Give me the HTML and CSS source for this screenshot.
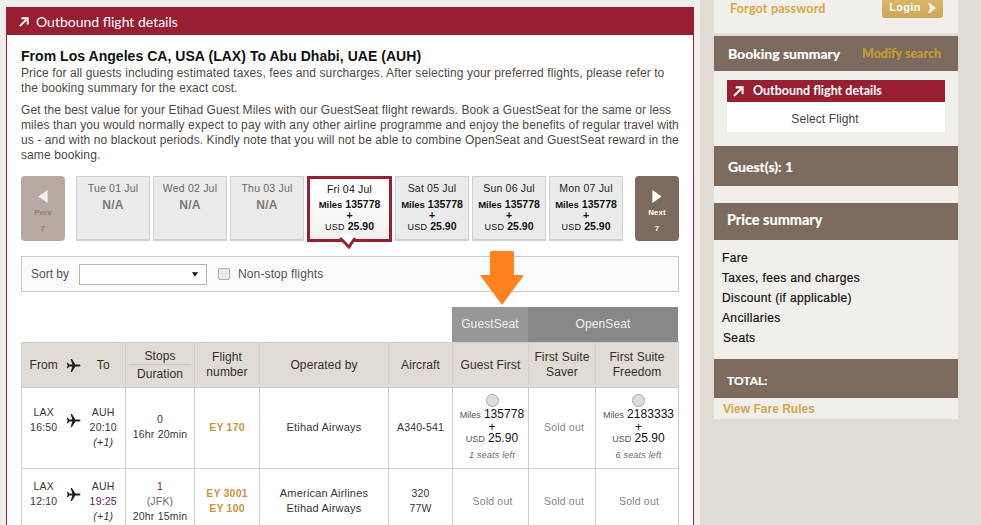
FILE: index.html
```html
<!DOCTYPE html>
<html lang="en">
<head>
<meta charset="utf-8">
<title>Outbound flight details</title>
<link rel="stylesheet" href="styles.css">
</head>
<body>
<div class="page">
  <main class="panel">
    <h2 class="panel-head"><svg class="go" viewBox="0 0 12 12"><path d="M1 11 9 3M3 1.500h7.500V9" fill="none" stroke="#fff" stroke-width="2.200"/></svg>Outbound flight details</h2>
    <div class="panel-body">
      <h3 class="route">From Los Angeles CA, USA (LAX) To Abu Dhabi, UAE (AUH)</h3>
      <p class="intro">Price for all guests including estimated taxes, fees and surcharges. After selecting your preferred flights, please refer to<br>the booking summary for the exact cost.</p>
      <p class="intro second">Get the best value for your Etihad Guest Miles with our GuestSeat flight rewards. Book a GuestSeat for the same or less<br>miles than you would normally expect to pay with any other airline programme and enjoy the benefits of regular travel with<br>us - and with no blackout periods. Kindly note that you will not be able to combine OpenSeat and GuestSeat reward in the<br>same booking.</p>

      <div class="dates">
        <div class="nav prev"><svg viewBox="0 0 10 14" class="nav-ico"><path d="M10 0v14L0 7z" fill="#f1efeb"/></svg><b>Prev</b><b>7</b></div>
        <div class="day na"><span>Tue 01 Jul</span><strong>N/A</strong></div>
        <div class="day na"><span>Wed 02 Jul</span><strong>N/A</strong></div>
        <div class="day na"><span>Thu 03 Jul</span><strong>N/A</strong></div>
        <div class="day sel"><span>Fri 04 Jul</span><em><i>Miles</i> 135778</em><em>+</em><em><i class="usd">USD</i> 25.90</em>
          <svg class="tail" viewBox="0 0 16 10"><path d="M0 0 9 9 15 0" fill="#fff" stroke="#981e32" stroke-width="3"/><path d="M2 0H14V-3H2z" fill="#fff"/></svg>
        </div>
        <div class="day"><span>Sat 05 Jul</span><em><i>Miles</i> 135778</em><em>+</em><em><i class="usd">USD</i> 25.90</em></div>
        <div class="day"><span>Sun 06 Jul</span><em><i>Miles</i> 135778</em><em>+</em><em><i class="usd">USD</i> 25.90</em></div>
        <div class="day"><span>Mon 07 Jul</span><em><i>Miles</i> 135778</em><em>+</em><em><i class="usd">USD</i> 25.90</em></div>
        <div class="nav next"><svg viewBox="0 0 10 14" class="nav-ico"><path d="M0 0v14L10 7z" fill="#fff"/></svg><b>Next</b><b>7</b></div>
      </div>

      <div class="sortbar">
        <span>Sort by</span>
        <div class="select"><svg viewBox="0 0 8 6"><path d="M0 0h8L4 6z" fill="#111"/></svg></div>
        <span class="check"></span>
        <span class="nonstop">Non-stop flights</span>
      </div>

      <div class="arrow"><svg viewBox="0 0 44 54"><path d="M10 1.500Q10 0 11.500 0H32.500Q34 0 34 1.500V24H42.500Q44 24 43 25.500L22 54 1 25.500Q0 24 1.500 24H10z" fill="#ff8122"/></svg></div>

      <div class="groups">
        <div class="group guest">GuestSeat</div>
        <div class="group open">OpenSeat</div>
      </div>

      <table class="flights">
        <colgroup>
          <col class="c-route"><col class="c-stops"><col class="c-flight"><col class="c-op"><col class="c-air"><col class="c-gf"><col class="c-sv"><col class="c-fr">
        </colgroup>
        <thead>
          <tr>
            <th><div class="legs head-legs"><span>From</span><svg class="plane" viewBox="0 0 16 14"><path d="M15.500 7c0-.8-1-1.100-2-1.100H10L6.300 0H4.900l1.900 5.900H3.400L1.900 4H.8l.9 3-.9 3h1.100l1.500-1.900h3.400L4.900 14h1.400L10 8.100h3.500c1 0 2-.3 2-1.100z" fill="#221c18"/></svg><span>To</span></div></th>
            <th class="stops-head"><div class="stop-line">Stops</div><div>Duration</div></th>
            <th>Flight<br>number</th>
            <th>Operated by</th>
            <th>Aircraft</th>
            <th>Guest First</th>
            <th>First Suite<br>Saver</th>
            <th>First Suite<br>Freedom</th>
          </tr>
        </thead>
        <tbody>
          <tr class="r1">
            <td><div class="legs"><span>LAX<br>16:50<br>&nbsp;</span><svg class="plane" viewBox="0 0 16 14"><path d="M15.500 7c0-.8-1-1.100-2-1.100H10L6.300 0H4.900l1.900 5.900H3.400L1.900 4H.8l.9 3-.9 3h1.100l1.500-1.900h3.400L4.900 14h1.400L10 8.100h3.500c1 0 2-.3 2-1.100z" fill="#221c18"/></svg><span>AUH<br>20:10<br><i class="plus">(+1)</i></span></div></td>
            <td>0<br>16hr 20min</td>
            <td class="fl">EY 170</td>
            <td class="op">Etihad Airways</td>
            <td>A340-541</td>
            <td class="fare"><span class="radio"></span><div><small>Miles</small> <b>135778</b></div><div class="pl">+</div><div class="us"><small>USD</small> <b>25.90</b></div><i class="left">1 seats left</i></td>
            <td class="sold">Sold out</td>
            <td class="fare"><span class="radio"></span><div><small>Miles</small> <b>2183333</b></div><div class="pl">+</div><div class="us"><small>USD</small> <b>25.90</b></div><i class="left">6 seats left</i></td>
          </tr>
          <tr class="r2">
            <td><div class="legs"><span>LAX<br>12:10<br>&nbsp;</span><svg class="plane" viewBox="0 0 16 14"><path d="M15.500 7c0-.8-1-1.100-2-1.100H10L6.300 0H4.900l1.900 5.900H3.400L1.900 4H.8l.9 3-.9 3h1.100l1.500-1.900h3.400L4.900 14h1.400L10 8.100h3.500c1 0 2-.3 2-1.100z" fill="#221c18"/></svg><span>AUH<br><span class="purple">19:25</span><br><i class="plus">(+1)</i></span></div></td>
            <td><span class="purple">1</span><br><span class="via">(JFK)</span><br>20hr 15min</td>
            <td class="fl">EY 3001<br>EY 100</td>
            <td class="op">American Airlines<br>Etihad Airways</td>
            <td>320<br>77W</td>
            <td class="sold">Sold out</td>
            <td class="sold">Sold out</td>
            <td class="sold">Sold out</td>
          </tr>
        </tbody>
      </table>
    </div>
  </main>

  <aside class="side">
    <div class="login-row"><a class="forgot">Forgot password</a><span class="login">Login<svg viewBox="0 0 8 10"><path d="M0 0h2l6 5-6 5H0l2-5z" fill="#f6efe0"/></svg></span></div>
    <div class="bar booking"><span>Booking summary</span><a>Modify search</a></div>
    <div class="summary">
      <div class="mini-head"><svg class="go" viewBox="0 0 12 12"><path d="M1 11 9 3M3 1.500h7.500V9" fill="none" stroke="#fff" stroke-width="2.200"/></svg>Outbound flight details</div>
      <div class="mini-body">Select Flight</div>
    </div>
    <div class="bar guests"><span>Guest(s): 1</span></div>
    <div class="spacer"></div>
    <div class="bar price"><span>Price summary</span></div>
    <ul class="costs">
      <li>Fare</li><li>Taxes, fees and charges</li><li>Discount (if applicable)</li><li>Ancillaries</li><li class="seats">Seats</li>
    </ul>
    <div class="bar total"><span>TOTAL:</span></div>
    <a class="rules">View Fare Rules</a>
  </aside>
</div>
</body>
</html>
```
FILE: styles.css
```css
* { box-sizing: border-box; }
html, body { margin: 0; height: 525px; overflow: hidden; }
body { background: #e0dcd5; font-family: "Liberation Sans", Arial, sans-serif; font-size: 12px; color: #4a4440; }
.page { display: flex; height: 525px; align-items: flex-start; }

.panel { width: 700px; height: 525px; flex: none; background: #f1efeb; padding: 7px 6px 0; }
.panel-head { margin: 0; height: 28px; background: #981e32; color: #fff; font: 400 14px/28px Lato, sans-serif; padding: 1px 0 0 13px; display: flex; align-items: center; }
.go { width: 10px; height: 10px; margin-right: 7px; flex: none; }
.panel-body { position: relative; height: 490px; overflow: hidden; background: #fff; border: solid #981e32; border-width: 0 1px; padding: 13px 14px 0; }
.route { margin: 0 0 2px; font: 700 14px/16px "Liberation Sans", sans-serif; color: #111; letter-spacing: .04px; white-space: nowrap; }
.intro { margin: 0; font-size: 12px; line-height: 15px; color: #4f4843; letter-spacing: .1px; white-space: nowrap; }
.second { margin-top: 7px; }

.dates { display: flex; margin-top: 13px; height: 66px; }
.nav { width: 44px; flex: none; height: 65px; border-radius: 4px; display: flex; flex-direction: column; align-items: center; padding-top: 14px; font-size: 8px; color: #8d8177; }
.nav b { display: block; line-height: 8px; margin-bottom: 8px; }
.nav-ico { width: 10px; height: 14px; margin-bottom: 6px; }
.prev { background: #b6aaa0; margin-right: 11px; }
.next { background: #7b6a5d; margin-left: 12px; color: #fff; }
.day { position: relative; width: 74px; height: 65px; flex: none; margin-right: 3px; background: #ebebeb; border: 1px solid #cfcfcf; border-bottom-width: 2px; text-align: center; font-size: 10.500px; color: #222; padding-top: 5px; letter-spacing: .2px; }
.day:nth-last-of-type(2) { margin-right: 0; }
.day span { display: block; line-height: 12px; }
.day em { display: block; font-style: normal; font-weight: 700; font-size: 10.500px; line-height: 10px; color: #111; letter-spacing: 0; }
.day span + em { margin-top: 5px; line-height: 11px; }
.day em + em + em { line-height: 12px; }
.day i { font-style: normal; font-size: 9.500px; }
.day .usd { font-weight: 400; font-size: 9px; letter-spacing: .3px; }
.na { color: #6b6661; }
.na strong { display: block; margin-top: 5px; font-size: 12px; line-height: 12px; color: #7e7974; }
.sel { width: 85px; height: 66px; background: linear-gradient(#fff 30%, #f0f0f0); border: 3px solid #981e32; padding-top: 4px; color: #111; }
.sel span + em { margin-top: 4px; }
.tail { position: absolute; left: 30px; top: 59px; width: 16px; height: 10px; overflow: visible; }

.sortbar { display: flex; align-items: center; margin-top: 14px; height: 36px; background: #fafafa; border: 1px solid #c9c9c9; padding-left: 9px; color: #555; font-size: 12px; }
.select { width: 128px; height: 21px; margin: 0 11px 0 10px; background: #fff; border: 1px solid #b7b3a6; display: flex; align-items: center; justify-content: flex-end; padding-right: 8px; }
.select svg { width: 6px; height: 5px; }
.check { width: 12px; height: 12px; background: #e9e9e9; border: 1px solid #adadad; border-radius: 2px; margin-right: 8px; }
.nonstop { letter-spacing: .12px; }

.arrow { position: absolute; left: 473px; top: 216px; width: 44px; height: 54px; }
.arrow svg { display: block; width: 44px; height: 54px; }

.groups { display: flex; justify-content: flex-end; margin-top: 15px; height: 35px; padding-right: 1px; }
.group { color: #f0f0f0; font-size: 12px; line-height: 35px; text-align: center; letter-spacing: .1px; }
.guest { width: 76px; background: #979797; }
.open { width: 150px; background: #888; }

.flights { table-layout: fixed; width: 657px; border-collapse: collapse; }
.c-route { width: 104px; }
.c-stops { width: 69px; }
.c-flight { width: 65px; }
.c-op { width: 129px; }
.c-air { width: 64px; }
.c-gf { width: 76px; }
.c-sv { width: 67px; }
.c-fr { width: 83px; }
th, td { border: 1px solid #cfcfcf; text-align: center; padding: 0; }
th { height: 45px; background: #e0dcd5; font-weight: 400; font-size: 12px; line-height: 15px; color: #352e29; letter-spacing: .1px; }
td { font-size: 10.500px; line-height: 15px; color: #3b3532; letter-spacing: .2px; vertical-align: middle; padding-bottom: 2px; }
.r1 td { height: 81px; }
.r2 td { height: 67px; }
.op { font-size: 11px; }
.legs { display: grid; grid-template-columns: 1fr 16px 1fr; align-items: center; justify-items: center; font-size: 10.500px; }
.head-legs { font-size: 12px; }
.r1 .plane, .r2 .plane { margin-top: -14px; }
.plane { width: 15px; height: 13px; display: block; }
.plus { font-size: 10.500px; }
.purple { color: #5f1b62; }
.via { color: #6e6863; }
.stops-head { padding: 6px 3px 0; vertical-align: top; }
.stop-line { border-bottom: 1px solid #cbc7c0; line-height: 14px; padding-bottom: 1px; margin-bottom: 2px; }
.fl { color: #c9963e; font-weight: 700; }
.sold { color: #8a8580; padding-left: 4px; }
.r1 .fare { line-height: 12px; color: #222; vertical-align: top; padding: 6px 0 0 3px; white-space: nowrap; }
.fare div { line-height: 12px; }
.fare .us { line-height: 11px; }
.fare small { font-size: 9px; color: #555; letter-spacing: 0; }
.fare b { font-weight: 400; font-size: 12px; color: #111; letter-spacing: .05px; }
.fare .pl { color: #111; font-size: 12px; }
.radio { display: block; width: 13px; height: 13px; margin: 0 auto 1px; border: 1px solid #aaa; border-radius: 50%; background: #ddd; }
.left { display: block; margin-top: 4px; font-size: 9px; color: #666; line-height: 12px; }

.side { width: 244px; margin-left: 14px; flex: none; }
.login-row { height: 33px; background: #f1efeb; display: flex; justify-content: space-between; padding: 0 0 0 16px; margin-bottom: 3px; }
.forgot { color: #dea644; font: 700 12.500px/17px Lato, sans-serif; letter-spacing: .2px; }
.login { width: 61px; height: 18px; margin: 0 15px 0 0; background: linear-gradient(#dbb566, #cba75f); border-radius: 0 0 3px 3px; color: #fff; font: 700 11px/15px "Liberation Sans", sans-serif; letter-spacing: .3px; display: flex; justify-content: center; align-items: flex-start; gap: 7px; }
.login svg { width: 8px; height: 10px; margin-top: 3px; }
.bar { background: #7b6a5d; color: #fff; font: 700 14px/18px Lato, sans-serif; -webkit-text-stroke: .2px #fff; }
.booking { height: 35px; display: flex; justify-content: space-between; align-items: center; padding: 0 17px 0 14px; }
.booking a { color: #c79a36; font-size: 12.500px; -webkit-text-stroke: .2px #c79a36; }
.summary { height: 75px; background: #f1efeb; padding: 9px 13px 0; }
.mini-head { height: 22px; background: #981e32; color: #fff; font: 700 12.500px/22px Lato, sans-serif; display: flex; align-items: center; padding-left: 6px; }
.mini-head .go { width: 11px; height: 11px; margin-right: 9px; }
.mini-body { height: 30px; background: #fff; text-align: center; font-size: 12px; line-height: 34px; color: #444; letter-spacing: .1px; padding-right: 22px; }
.guests { height: 40px; padding: 12px 14px 0; }
.spacer { height: 17px; background: #f1efeb; }
.price { height: 37px; padding: 8px 13px 0; font-size: 14.500px; }
.costs { list-style: none; margin: 0; padding: 8px 8px 0; height: 119px; background: #f1efeb; font-size: 12px; line-height: 20px; color: #111; letter-spacing: .35px; }
.costs li { -webkit-text-stroke: .2px #111; }
.seats { padding-left: 1px; }
.total { height: 39px; padding: 13px 13px 0; font-size: 12px; }
.rules { display: block; height: 21px; background: #f1efeb; padding-left: 9px; color: #d4a650; font: 700 12px/22px "Liberation Sans", sans-serif; }
```
